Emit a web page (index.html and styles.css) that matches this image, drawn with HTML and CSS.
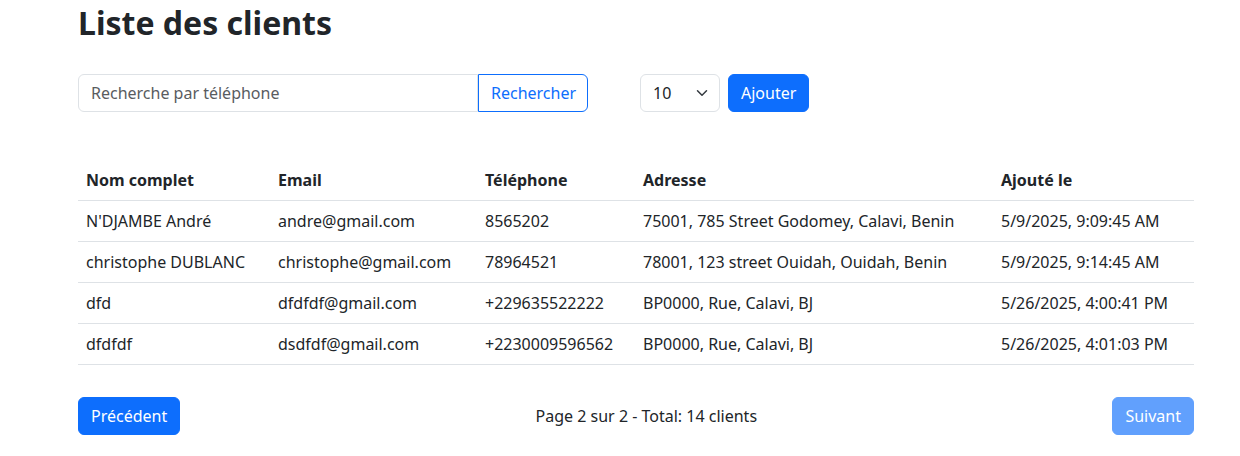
FILE: index.html
```html
<!DOCTYPE html>
<html lang="fr">
<head>
<meta charset="utf-8">
<title>Liste des clients</title>
<link rel="stylesheet" href="styles.css">
</head>
<body>
<div class="page">
  <h1 class="title">Liste des clients</h1>
  <div class="toolbar">
    <div class="search-group">
      <input class="search-input" type="text" placeholder="Recherche par téléphone">
      <button class="btn btn-outline">Rechercher</button>
    </div>
    <div class="select">
      <span>10</span>
      <svg class="chev" width="16" height="16" viewBox="0 0 16 16"><path d="M2 5l6 6 6-6" fill="none" stroke="#343a40" stroke-width="2" stroke-linecap="round" stroke-linejoin="round"/></svg>
    </div>
    <button class="btn btn-primary">Ajouter</button>
  </div>
  <table class="table">
    <thead>
      <tr><th class="c1">Nom complet</th><th class="c2">Email</th><th class="c3">Téléphone</th><th class="c4">Adresse</th><th class="c5">Ajouté le</th></tr>
    </thead>
    <tbody>
      <tr><td>N'DJAMBE André</td><td>andre@gmail.com</td><td>8565202</td><td>75001, 785 Street Godomey, Calavi, Benin</td><td>5/9/2025, 9:09:45 AM</td></tr>
      <tr><td>christophe DUBLANC</td><td>christophe@gmail.com</td><td>78964521</td><td>78001, 123 street Ouidah, Ouidah, Benin</td><td>5/9/2025, 9:14:45 AM</td></tr>
      <tr><td>dfd</td><td>dfdfdf@gmail.com</td><td>+229635522222</td><td>BP0000, Rue, Calavi, BJ</td><td>5/26/2025, 4:00:41 PM</td></tr>
      <tr><td>dfdfdf</td><td>dsdfdf@gmail.com</td><td>+2230009596562</td><td>BP0000, Rue, Calavi, BJ</td><td>5/26/2025, 4:01:03 PM</td></tr>
    </tbody>
  </table>
  <div class="pager">
    <button class="btn btn-primary">Précédent</button>
    <span class="pager-info">Page 2 sur 2 - Total: 14 clients</span>
    <button class="btn btn-primary disabled">Suivant</button>
  </div>
</div>
</body>
</html>
```

FILE: styles.css
```css
* { box-sizing: border-box; }
html, body { margin: 0; padding: 0; background: #fff; }
body {
  font-family: "Noto Sans", "Open Sans", sans-serif;
  font-size: 16px;
  line-height: 1.5;
  color: #212529;
}
.page {
  width: 1116px;
  margin-left: 78px;
  padding-top: 4px;
}
.title {
  margin: 0 0 32px;
  font-size: 32px;
  font-weight: 700;
  line-height: 38px;
}
.toolbar {
  display: flex;
  align-items: center;
  height: 38px;
}
.search-group {
  display: flex;
  width: 510px;
  margin-right: 52px;
}
.search-input {
  width: 400px;
  height: 38px;
  border: 1px solid #dee2e6;
  border-radius: 6px 0 0 6px;
  padding: 6px 12px;
  font: inherit;
  color: #212529;
  outline: none;
}
.search-input::placeholder { color: #595c5f; }
.btn {
  height: 38px;
  padding: 6px 12px;
  font: inherit;
  line-height: 24px;
  border-radius: 6px;
  border: 1px solid #0d6efd;
  cursor: pointer;
}
.btn-outline {
  background: #fff;
  color: #0d6efd;
  border-radius: 0 6px 6px 0;
  width: 110px;
}
.btn-primary {
  background: #0d6efd;
  color: #fff;
}
.btn-primary.disabled { opacity: 0.65; }
.select {
  width: 80px;
  height: 38px;
  border: 1px solid #dee2e6;
  border-radius: 6px;
  padding: 6px 12px;
  display: flex;
  align-items: center;
  justify-content: space-between;
  margin-right: 8px;
}
.chev { width: 12px; height: 12px; margin-right: -1px; }
.table {
  width: 100%;
  border-collapse: collapse;
  margin-top: 48px;
  table-layout: fixed;
}
.table th, .table td {
  text-align: left;
  padding: 8px;
  border-bottom: 1px solid #dee2e6;
  white-space: nowrap;
}
.table th { font-weight: 700; }
.c1 { width: 192px; }
.c2 { width: 207px; }
.c3 { width: 158px; }
.c4 { width: 358px; }
.c5 { width: 201px; }
.pager {
  display: flex;
  justify-content: space-between;
  align-items: center;
  margin-top: 32px;
}
```
